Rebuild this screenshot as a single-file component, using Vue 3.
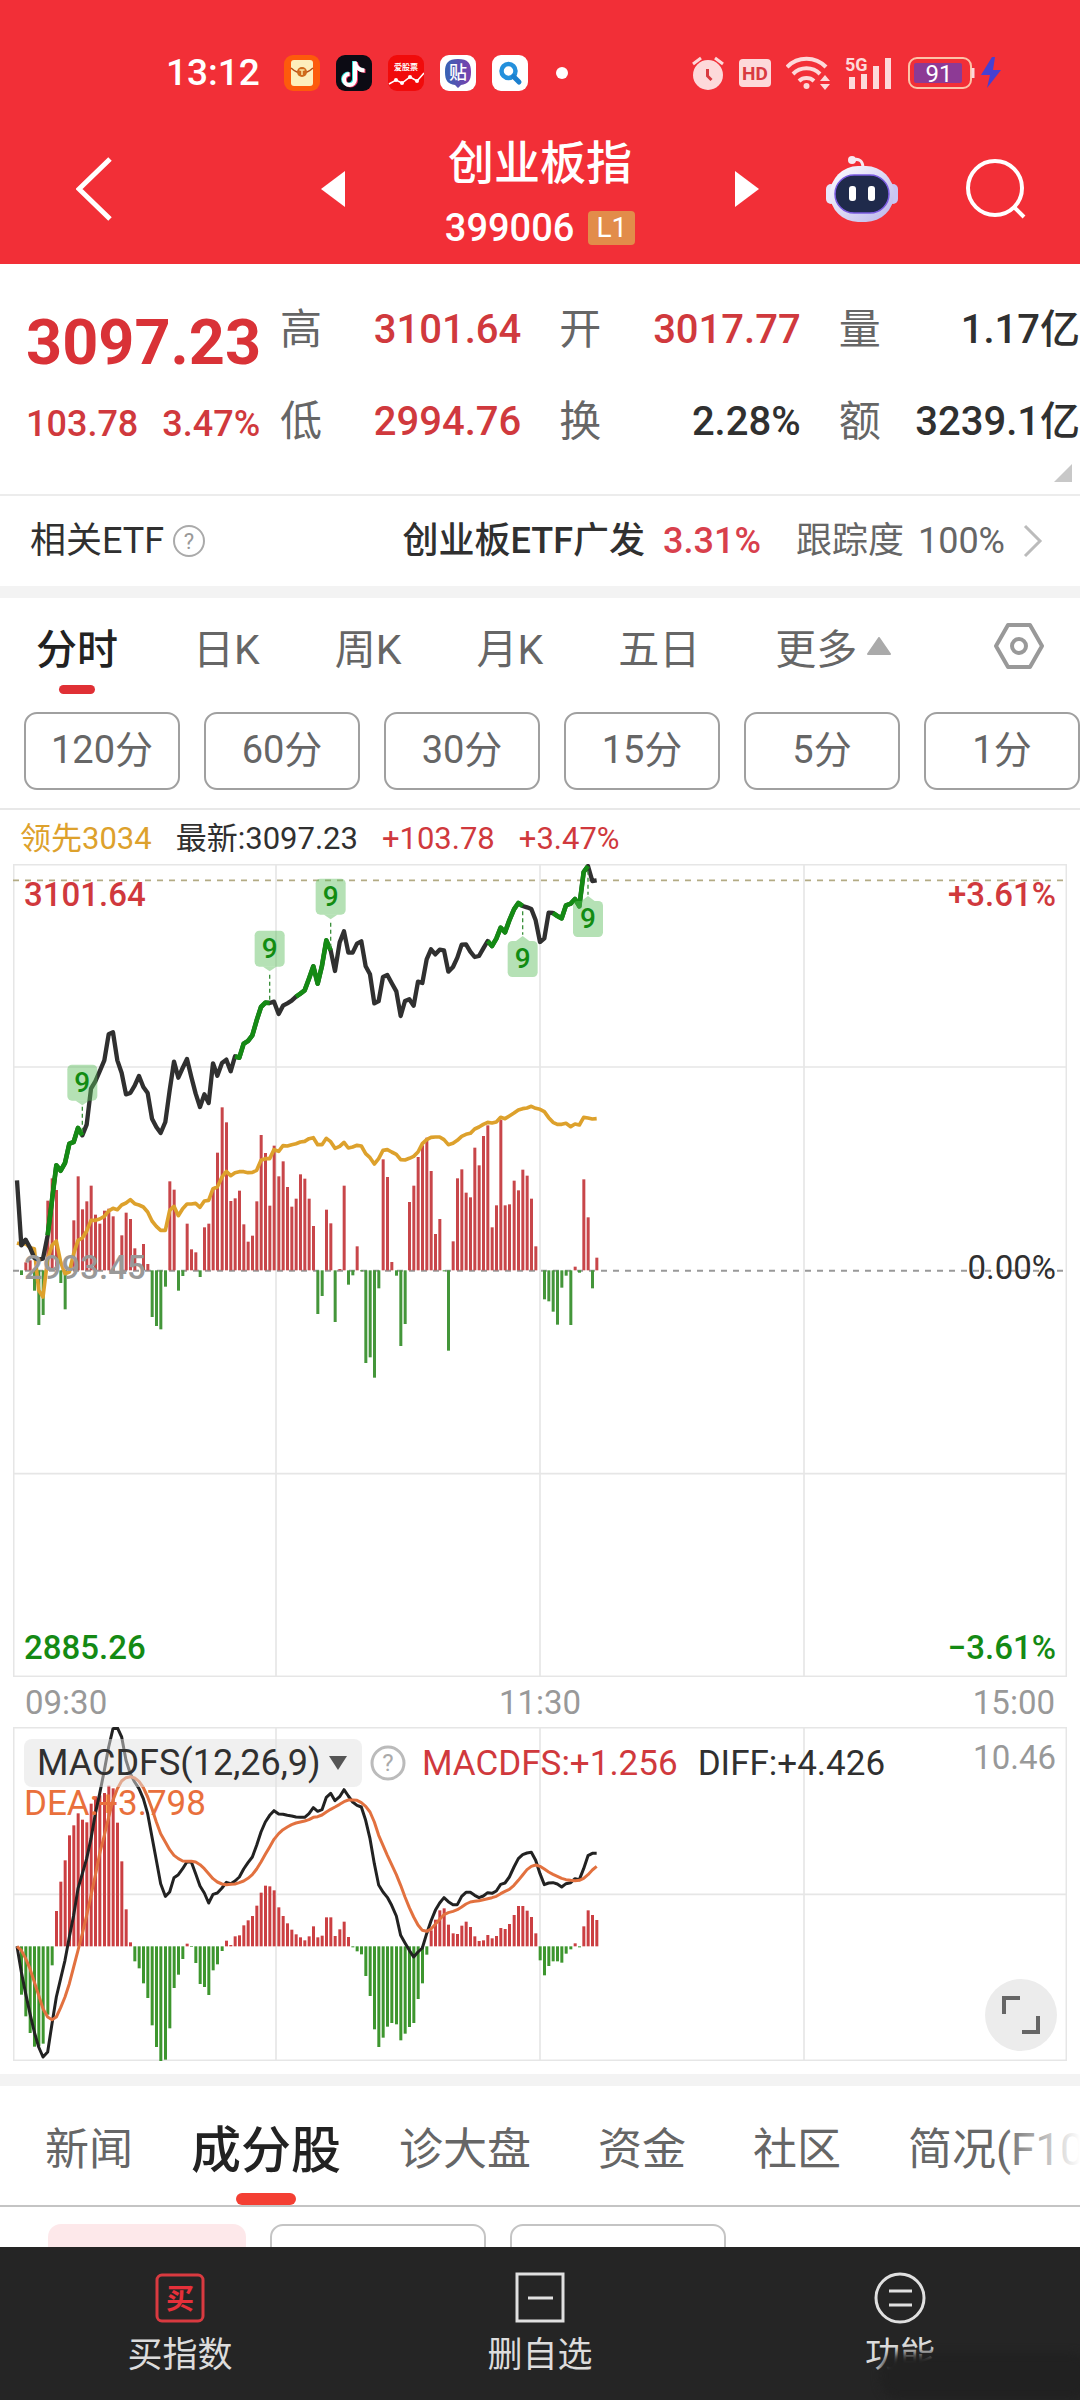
<script setup>
import { ref } from 'vue'

const stats = [
  [{ label: '高', value: '3101.64', up: true }, { label: '开', value: '3017.77', up: true }, { label: '量', value: '1.17亿' }],
  [{ label: '低', value: '2994.76', up: true }, { label: '换', value: '2.28%' }, { label: '额', value: '3239.1亿' }],
]
const periods = ['分时', '日K', '周K', '月K', '五日', '更多']
const minutes = ['120分', '60分', '30分', '15分', '5分', '1分']
const sections = ['新闻', '成分股', '诊大盘', '资金', '社区', '简况(F10)']
const period = ref('分时')
const section = ref('成分股')
const indicator = ref('MACDFS(12,26,9)')

// One entry per trading minute; 3 chart units equal one pixel at full width.
const STEP = 13.075
const ZERO = 1219
const MACD_ZERO = 658
const px = (i) => Math.round(12 + STEP * i)

const price = [
  960, 1155, 1138, 1162, 1193, 1198, 1195, 1125, 1020, 915, 931, 908, 850, 845, 803, 825, 793, 685, 663, 633,
  600, 522, 516, 600, 638, 702, 698, 676, 647, 680, 698, 775, 800, 818, 785, 690, 604, 652, 623, 596,
  650, 700, 740, 702, 728, 609, 646, 608, 598, 633, 588, 592, 550, 542, 525, 480, 440, 427, 428, 424,
  461, 436, 429, 421, 409, 400, 390, 355, 318, 370, 316, 240, 270, 332, 246, 213, 277, 277, 250, 243,
  318, 342, 429, 422, 350, 344, 368, 393, 467, 422, 417, 436, 364, 368, 297, 267, 282, 268, 270, 334,
  320, 292, 253, 252, 274, 290, 287, 264, 242, 257, 235, 202, 216, 180, 147, 128, 137, 141, 146, 180,
  245, 234, 157, 158, 167, 174, 135, 130, 116, 138, 35, 17, 62, 60,
]
const lead = [
  1148, 1152, 1150, 1162, 1165, 1290, 1310, 1195, 1155, 1142, 1205, 1240, 1235, 1180, 1140, 1133, 1112, 1080, 1080, 1076,
  1068, 1052, 1044, 1048, 1034, 1028, 1018, 1030, 1034, 1040, 1055, 1082, 1098, 1110, 1110, 1050, 1038, 1066, 1045, 1031,
  1031, 1029, 1041, 1022, 1020, 985, 980, 950, 933, 946, 937, 934, 934, 937, 936, 930, 900, 895, 895, 868,
  873, 856, 857, 853, 850, 845, 843, 835, 832, 853, 853, 834, 844, 864, 858, 846, 863, 860, 855, 857,
  880, 892, 911, 895, 870, 868, 875, 882, 898, 899, 894, 888, 875, 850, 838, 831, 830, 830, 838, 853,
  849, 840, 828, 822, 819, 806, 800, 792, 786, 788, 785, 771, 775, 767, 758, 749, 745, 743, 738, 744,
  747, 754, 772, 786, 792, 792, 789, 799, 791, 794, 771, 773, 776, 775,
]
const flow = [
  0, -14, 24, 30, -61, -164, -134, 209, 276, 241, -38, -117, 0, 150, 282, 183, 207, 254, 167, 140,
  179, 185, 162, 0, 105, 173, 154, 66, 0, 79, 19, -140, -167, -177, -49, 267, 242, -61, -17, 140,
  63, 54, -20, 129, 140, 245, 353, 489, 444, 208, 216, 239, 138, 86, 104, 207, 406, 352, 194, 374,
  282, 327, 250, 191, 215, 288, 275, 215, 133, -131, -77, 182, 141, -155, 4, 254, -43, -15, 72, -3,
  -278, -261, -322, -54, 333, 280, 25, -16, -227, -161, 205, 254, 340, 375, 398, 298, 109, 154, -3, -241,
  87, 276, 303, 233, 219, 368, 315, 403, 435, 129, 195, 452, 195, 198, 269, 240, 302, 284, 215, 72,
  0, -87, -93, -124, -163, -52, -16, -164, 11, -7, 273, 159, -54, 38,
]
const macd = [
  0, -145, -210, -260, -301, -300, -292, -205, -57, 106, 194, 258, 333, 363, 399, 380, 372, 428, 450, 453,
  460, 482, 474, 371, 255, 111, 12, -45, -66, -111, -155, -237, -302, -344, -340, -246, -125, -85, -38, 8,
  -2, -50, -113, -122, -146, -72, -54, -14, 17, 4, 30, 33, 63, 78, 91, 122, 161, 182, 180, 168,
  117, 91, 69, 50, 36, 27, 18, 30, 60, 27, 32, 87, 87, 31, 51, 74, 28, -3, -15, -24,
  -89, -149, -249, -302, -274, -241, -230, -234, -282, -262, -242, -230, -158, -111, -25, 48, 80, 108, 114, 65,
  39, 37, 62, 74, 58, 30, 16, 18, 34, 24, 31, 55, 52, 67, 94, 121, 121, 107, 88, 39,
  -42, -87, -59, -45, -45, -49, -22, -9, 9, -3, 60, 108, 94, 79,
]
const diff = [
  678, 755, 820, 880, 935, 980, 1010, 995, 910, 830, 775, 720, 650, 585, 505, 460, 415, 355, 280, 220,
  150, 80, 25, 22, 50, 120, 160, 185, 205, 235, 280, 350, 420, 490, 528, 515, 472, 463, 445, 424,
  425, 460, 497, 518, 548, 522, 518, 503, 486, 490, 482, 470, 446, 427, 410, 375, 335, 305, 285, 271,
  281, 282, 285, 287, 290, 291, 291, 280, 262, 273, 268, 231, 219, 241, 229, 208, 227, 245, 255, 260,
  300, 355, 430, 494, 515, 531, 555, 587, 645, 668, 690, 710, 695, 683, 640, 602, 570, 548, 532, 544,
  553, 553, 528, 516, 516, 525, 532, 527, 517, 519, 512, 492, 488, 470, 440, 415, 403, 398, 396, 420,
  460, 493, 488, 487, 491, 500, 490, 487, 475, 478, 445, 406, 399, 399,
]
const dea = [
  678, 690, 715, 745, 785, 825, 865, 890, 898, 890, 862, 830, 790, 740, 690, 640, 585, 525, 465, 400,
  345, 290, 240, 205, 182, 172, 169, 173, 183, 202, 230, 265, 305, 340, 365, 388, 405, 415, 422, 423,
  423, 425, 433, 445, 460, 475, 485, 491, 493, 492, 491, 487, 482, 474, 463, 446, 425, 402, 380, 357,
  340, 328, 320, 313, 308, 305, 302, 298, 291, 289, 284, 275, 267, 260, 252, 244, 239, 239, 240, 247,
  258, 275, 305, 345, 375, 405, 433, 463, 495, 530, 562, 590, 614, 630, 633, 626, 612, 597, 583, 577,
  573, 568, 560, 551, 545, 543, 541, 538, 535, 532, 528, 520, 513, 507, 495, 480, 464, 448, 438, 434,
  438, 446, 455, 462, 468, 474, 478, 480, 481, 480, 474, 463, 449, 438,
]

const line = (series, from, to, shift) =>
  series.slice(from, to + 1).map((y, k) => `${px(from + k)},${y - shift}`).join(' ')

const pricePath = line(price, 0, 133, 11)
const leadPath = line(lead, 0, 133, 11)
const diffPath = line(diff, 0, 133, 20)
const deaPath = line(dea, 0, 133, 20)
// Runs of nine rising minutes are drawn green and end in a "9" flag.
const runs = [7, 50, 64, 108, 123].map((s) => line(price, s, s + 8, 11))
const flags = [
  { i: 15, box: 602, tip: 724, stem: [728, 806], above: true },
  { i: 58, box: 200, tip: 322, stem: [332, 414], above: true },
  { i: 72, box: 44, tip: 166, stem: [176, 254], above: true },
  { i: 116, box: 231, tip: 216, stem: [142, 212], above: false },
  { i: 131, box: 111, tip: 96, stem: [20, 92], above: false },
]
const bars = (series, zero) =>
  series.map((v, i) => ({ x: px(i) - 4, y: v > 0 ? zero - v : zero, h: Math.abs(v), up: v > 0 })).filter((b) => b.h)
const flowBars = bars(flow, ZERO)
const macdBars = bars(macd, MACD_ZERO)
</script>

<template>
  <div class="app">
    <header class="top">
      <div class="status">
        <div class="status-left">
          <span class="clock">13:12</span>
          <svg class="app-icon" viewBox="0 0 36 36"><rect width="36" height="36" rx="9" fill="#fd5a0c" /><rect x="7" y="5" width="22" height="26" rx="3" fill="#fdeebd" /><path d="M7 13 Q18 23 29 13" fill="none" stroke="#b5501a" stroke-width="1.5" /><circle cx="18" cy="17" r="5" fill="#cf6a1c" /><path d="M15.500 15h5M18 15v5" stroke="#fbe3a0" stroke-width="1.500" /></svg>
          <svg class="app-icon" viewBox="0 0 36 36"><rect width="36" height="36" rx="9" fill="#0c0b14" /><g fill="none" stroke-width="4"><path d="M18 6v18a5.500 5.500 0 1 1-5.500-5.500M18 7c1 5 5 8 9.500 8" stroke="#2fe0dc" /><path d="M20 7v18a5.500 5.500 0 1 1-5.500-5.500M20 8c1 5 5 8 9.500 8" stroke="#ef3060" /><path d="M19 6.500v18a5.500 5.500 0 1 1-5.500-5.500M19 7.500c1 5 5 8 9.500 8" stroke="#fff" /></g></svg>
          <svg class="app-icon" viewBox="0 0 36 36"><rect width="36" height="36" rx="9" fill="#f10b0b" /><text x="18" y="15" text-anchor="middle" font-size="8" font-weight="700" fill="#fff">爱股票</text><path d="M1 29 8 25l6 3 8-6 7 4 7-8" fill="none" stroke="#fff" stroke-width="1.500" /><g fill="#fff"><circle cx="8" cy="25" r="2" /><circle cx="14" cy="28" r="2" /><circle cx="22" cy="22" r="2" /><circle cx="29" cy="26" r="2" /></g></svg>
          <svg class="app-icon" viewBox="0 0 36 36"><defs><linearGradient id="tie" x1="0" x2="1"><stop offset="0" stop-color="#3563b4" /><stop offset="1" stop-color="#7b3fae" /></linearGradient></defs><rect width="36" height="36" rx="9" fill="#fff" /><path d="M18 4c10 0 13 4 13 13s-3 12-10 13l-3 3-3-3C8 29 5 26 5 17S8 4 18 4z" fill="url(#tie)" /><text x="18" y="24" text-anchor="middle" font-size="18" font-weight="500" fill="#fff">贴</text></svg>
          <svg class="app-icon" viewBox="0 0 36 36"><rect width="36" height="36" rx="9" fill="#fff" /><circle cx="16.500" cy="16" r="7" fill="none" stroke="#2490dc" stroke-width="4.500" /><path d="M21.500 21.500 27 27" stroke="#1c80cf" stroke-width="5" stroke-linecap="round" /></svg>
          <i class="more-dot"></i>
        </div>
        <div class="status-right">
          <svg width="32" height="36" viewBox="0 0 32 36"><g fill="none" stroke="#fdd9da" stroke-width="3"><path d="M1 9 9 3M31 9 23 3" /></g><circle cx="16" cy="20" r="15" fill="#fdd9da" /><path d="M15.500 14v7l4 4" fill="none" stroke="#d93a40" stroke-width="3" /></svg>
          <svg width="32" height="28" viewBox="0 0 32 28"><rect width="32" height="28" rx="4" fill="#fdd9da" /><text x="16" y="21" text-anchor="middle" font-size="19" font-weight="700" fill="#d93a40">HD</text></svg>
          <svg width="44" height="34" viewBox="0 0 44 34"><g fill="none" stroke="#fdd9da" stroke-width="4"><path d="M1 11a27 27 0 0 1 39 0" /><path d="M7 18a19 19 0 0 1 27 0" /><path d="M13 25a11 11 0 0 1 15 0" /></g><circle cx="20.500" cy="30" r="3" fill="#fdd9da" /><path d="m39 19 5 6H34zM39 34l5-6H34z" fill="#fdd9da" /></svg>
          <svg width="48" height="34" viewBox="0 0 48 34"><text x="0" y="15" font-size="18" font-weight="700" fill="#fdd9da">5G</text><g fill="#fdd9da"><rect x="4" y="21" width="6" height="12" /><rect x="16" y="18" width="6" height="15" /><rect x="28" y="10" width="6" height="23" /><rect x="40" y="2" width="6" height="31" /></g></svg>
          <svg width="96" height="32" viewBox="0 0 96 32"><rect x="1" y="1" width="62" height="30" rx="8" fill="none" stroke="#fdc3a8" stroke-width="2" /><rect x="6" y="6" width="48" height="20" rx="2" fill="#8d3a95" /><path d="M65 11v10" stroke="#fdd9da" stroke-width="3" /><text x="31" y="25" text-anchor="middle" font-size="24" fill="#fff">91</text><path d="M84 0 73 18h9l-3 13 14-18h-8l2-13z" fill="#4740d2" /></svg>
        </div>
      </div>
      <nav class="titlebar">
        <button class="icon-btn back" aria-label="返回"><svg width="36" height="64" viewBox="0 0 36 64"><path d="M34 2 3 32l31 30" fill="none" stroke="#fff" stroke-width="5" /></svg></button>
        <div class="switcher">
          <button class="icon-btn" aria-label="上一个"><svg width="24" height="36" viewBox="0 0 24 36"><path d="M24 0v36L0 18z" fill="#fff" /></svg></button>
          <div class="names">
            <h1>创业板指</h1>
            <p>399006 <span class="level">L1</span></p>
          </div>
          <button class="icon-btn" aria-label="下一个"><svg width="24" height="36" viewBox="0 0 24 36"><path d="M0 0v36l24-18z" fill="#fff" /></svg></button>
        </div>
        <div class="tools">
          <button class="icon-btn" aria-label="智能助手">
            <svg width="72" height="68" viewBox="0 0 72 68"><defs><linearGradient id="shell" x1="0" y1="0" x2="1" y2="1"><stop offset="0" stop-color="#fff" /><stop offset="1" stop-color="#b9b4ea" /></linearGradient></defs><path d="M27 5c6-2 10 1 10 8" fill="none" stroke="#f7e9f1" stroke-width="3" /><circle cx="26" cy="5" r="4" fill="#f7e9f1" /><rect x="0" y="29" width="10" height="20" rx="5" fill="#e8e6fa" /><rect x="62" y="29" width="10" height="20" rx="5" fill="#c9c6f4" /><rect x="4" y="11" width="64" height="56" rx="28" fill="url(#shell)" /><rect x="9" y="20" width="54" height="38" rx="19" fill="#1f2a4b" stroke="#7a5be0" stroke-width="1.500" /><rect x="23" y="31" width="7" height="15" rx="3" fill="#fff" /><rect x="42" y="31" width="7" height="15" rx="3" fill="#fff" /></svg>
          </button>
          <button class="icon-btn" aria-label="搜索"><svg width="60" height="60" viewBox="0 0 60 60"><circle cx="29" cy="29" r="27" fill="none" stroke="#fff" stroke-width="4" /><path d="m48 48 10 10" stroke="#fff" stroke-width="4" /></svg></button>
        </div>
      </nav>
    </header>

    <main class="content">
      <section class="quote">
        <div class="last">
          <strong>3097.23</strong>
          <p><span>103.78</span><span>3.47%</span></p>
        </div>
        <div class="stats">
          <div v-for="(row, r) in stats" :key="r" class="stat-row">
            <div v-for="s in row" :key="s.label" class="stat">
              <span>{{ s.label }}</span><b :class="{ up: s.up }">{{ s.value }}</b>
            </div>
          </div>
        </div>
        <svg class="corner" width="18" height="18" viewBox="0 0 18 18"><path d="M18 0v18H0z" fill="#c8c8c8" /></svg>
      </section>

      <a class="etf" href="#etf">
        <span>相关ETF</span>
        <svg class="help" width="34" height="34" viewBox="0 0 34 34"><circle cx="17" cy="17" r="15" fill="none" stroke="#aaa" stroke-width="2" /><text x="17" y="25" text-anchor="middle" font-size="22" fill="#999">?</text></svg>
        <span class="etf-name">创业板ETF广发</span>
        <span class="etf-rise">3.31%</span>
        <span class="etf-track"><span>跟踪度</span><span>100%</span></span>
        <svg width="20" height="34" viewBox="0 0 20 34"><path d="m2 2 15 15L2 32" fill="none" stroke="#bbb" stroke-width="3" /></svg>
      </a>

      <div class="band"></div>

      <div class="periods">
        <button v-for="p in periods" :key="p" :class="{ active: p === period }" @click="period = p">
          {{ p }}<svg v-if="p === '更多'" width="24" height="18" viewBox="0 0 24 18"><path d="M12 1 23 17H1z" fill="#aaa" stroke="#aaa" stroke-width="2" stroke-linejoin="round" /></svg>
        </button>
        <button class="settings" aria-label="设置"><svg width="50" height="48" viewBox="0 0 50 48"><path d="M14 3h22l12 21-12 21H14L2 24z" fill="none" stroke="#999" stroke-width="4" stroke-linejoin="round" /><circle cx="25" cy="24" r="7" fill="none" stroke="#999" stroke-width="4" /></svg></button>
      </div>

      <div class="minutes">
        <button v-for="m in minutes" :key="m">{{ m }}</button>
      </div>

      <p class="legend">
        <span class="lead">领先3034</span><span>最新:3097.23</span><span class="up">+103.78</span><span class="up">+3.47%</span>
      </p>

      <section class="chart">
        <svg viewBox="0 0 3162 2439">
          <g stroke="#e6e6e6" stroke-width="5" fill="none">
            <rect x="2" y="2" width="3158" height="2435" />
            <path d="M0 609H3162M0 1829H3162M789 0V2439M1581 0V2439M2373 0V2439" />
          </g>
          <path d="M0 49H3162" stroke="#b3ab84" stroke-width="5" stroke-dasharray="18 18" />
          <path d="M0 1220H3162" stroke="#999" stroke-width="6" stroke-dasharray="18 18" />
          <rect v-for="b in flowBars" :key="b.x" :x="b.x" :y="b.y" width="9" :height="b.h" :fill="b.up ? '#c8464a' : '#44963a'" />
          <polyline :points="leadPath" fill="none" stroke="#dda12c" stroke-width="11" stroke-linejoin="round" />
          <polyline :points="pricePath" fill="none" stroke="#303030" stroke-width="13" stroke-linejoin="round" />
          <polyline v-for="(r, k) in runs" :key="k" :points="r" fill="none" stroke="#148a14" stroke-width="14" stroke-linejoin="round" />
          <g v-for="f in flags" :key="f.i">
            <path :d="`M${px(f.i)} ${f.stem[0]}V${f.stem[1]}`" stroke="#3b8f3b" stroke-width="4" stroke-dasharray="12 9" />
            <path :d="f.above ? `M${px(f.i) - 20} ${f.box + 108}h40L${px(f.i)} ${f.tip}z` : `M${px(f.i) - 20} ${f.box}h40L${px(f.i)} ${f.tip}z`" fill="#5bbd5b" fill-opacity=".45" />
            <rect :x="px(f.i) - 45" :y="f.box" width="90" height="108" rx="14" fill="#5bbd5b" fill-opacity=".45" />
            <text :x="px(f.i)" :y="f.box + 82" text-anchor="middle" font-size="84" font-weight="500" fill="#128c12">9</text>
          </g>
        </svg>
        <span class="tag high up">3101.64</span>
        <span class="tag high right up">+3.61%</span>
        <span class="tag mid">2993.45</span>
        <span class="tag mid right dark">0.00%</span>
        <span class="tag low down">2885.26</span>
        <span class="tag low right down">−3.61%</span>
      </section>

      <div class="axis"><span>09:30</span><span>11:30</span><span>15:00</span></div>

      <section class="chart macd">
        <svg viewBox="0 0 3162 1002">
          <g stroke="#e6e6e6" stroke-width="5" fill="none">
            <rect x="2" y="2" width="3158" height="998" />
            <path d="M0 502H3162M789 0V1002M1581 0V1002M2373 0V1002" />
          </g>
          <rect v-for="b in macdBars" :key="b.x" :x="b.x" :y="b.y" width="9" :height="b.h" :fill="b.up ? '#cb3f42' : '#3d962e'" />
          <polyline :points="diffPath" fill="none" stroke="#222" stroke-width="9" stroke-linejoin="round" />
          <polyline :points="deaPath" fill="none" stroke="#e2713f" stroke-width="9" stroke-linejoin="round" />
        </svg>
        <div class="macd-head">
          <span class="picker">
            <select v-model="indicator" aria-label="指标"><option>MACDFS(12,26,9)</option></select>
            <svg width="18" height="14" viewBox="0 0 18 14"><path d="M0 0h18L9 14z" fill="#555" /></svg>
          </span>
          <svg class="help" width="36" height="36" viewBox="0 0 36 36"><circle cx="18" cy="18" r="16" fill="none" stroke="#bbb" stroke-width="3" /><text x="18" y="26" text-anchor="middle" font-size="24" fill="#aaa">?</text></svg>
          <span class="up">MACDFS:+1.256</span>
          <span>DIFF:+4.426</span>
        </div>
        <span class="dea">DEA:+3.798</span>
        <span class="tag scale right">10.46</span>
        <button class="expand" aria-label="全屏"><svg width="38" height="38" viewBox="0 0 38 38"><path d="M2 18V2h16M36 20v16H20" fill="none" stroke="#666" stroke-width="4" /></svg></button>
      </section>

      <div class="band"></div>

      <div class="sections">
        <button v-for="s in sections" :key="s" :class="{ active: s === section }" @click="section = s">{{ s }}</button>
      </div>
      <div class="filters"><i class="on"></i><i></i><i></i></div>
    </main>

    <footer class="actions">
      <button>
        <svg width="52" height="52" viewBox="0 0 52 52"><rect x="3" y="3" width="46" height="46" rx="5" fill="none" stroke="#d93a40" stroke-width="3" /><text x="26" y="37" text-anchor="middle" font-size="28" font-weight="700" fill="#e6303a">买</text></svg>
        <span>买指数</span>
      </button>
      <button>
        <svg width="52" height="52" viewBox="0 0 52 52"><path d="M3 2h46v47H3zM14 26h25" fill="none" stroke="#e0e0e0" stroke-width="3" /></svg>
        <span>删自选</span>
      </button>
      <button>
        <svg width="52" height="52" viewBox="0 0 52 52"><circle cx="26" cy="26" r="24" fill="none" stroke="#e0e0e0" stroke-width="3" /><path d="M15 19h23M15 33h23" stroke="#e0e0e0" stroke-width="3" /></svg>
        <span>功能</span>
      </button>
      <i class="smudge"></i>
    </footer>
  </div>
</template>

<style>
body {
  margin: 0;
  background: #fff;
}
</style>

<style scoped>
.app {
  display: flex;
  flex-direction: column;
  height: 100vh;
  overflow: hidden;
  font-family: Roboto, "Noto Sans CJK SC", sans-serif;
  color: #303030;
}
svg { display: block; flex: none; }
button { border: 0; padding: 0; background: none; font: inherit; color: inherit; }
h1, p { margin: 0; }
.up { color: #d0393d; }
.down { color: #148a14; }
.dark { color: #303030; }

.top { flex: none; background: #f22f37; color: #fff; padding-top: 48px; }
.status { display: flex; justify-content: space-between; align-items: center; height: 50px; padding: 0 76px 0 166px; }
.status-left, .status-right { display: flex; align-items: center; gap: 16px; }
.clock { font-size: 37px; line-height: 50px; padding-right: 8px; font-weight: 500; }
.app-icon { width: 36px; height: 36px; }
.more-dot { width: 12px; height: 12px; border-radius: 50%; background: #fff; margin-left: 12px; }
.status-right { gap: 15px; }
.titlebar { display: grid; grid-template-columns: 1fr 438px 1fr; align-items: center; height: 166px; padding: 16px 54px 0; box-sizing: border-box; }
.back { justify-self: start; margin-left: 22px; }
.switcher { display: flex; justify-content: space-between; align-items: center; }
.names { display: flex; flex-direction: column; align-items: center; padding-top: 12px; }
h1 { font-size: 46px; line-height: 66px; font-weight: 500; }
.names p { display: flex; align-items: center; gap: 14px; font-size: 38px; line-height: 64px; font-weight: 500; }
.level { background: #e28c4a; border-radius: 4px; font-size: 28px; line-height: 34px; padding: 0 8px; font-weight: 400; }
.tools { display: flex; justify-content: flex-end; align-items: center; gap: 68px; }

.content { flex: 1; min-height: 0; overflow: hidden; }
.quote { position: relative; display: flex; padding-top: 33px; border-bottom: 2px solid #ececec; box-sizing: border-box; height: 232px; }
.last { width: 280px; flex: none; padding-left: 26px; box-sizing: border-box; color: #d93237; white-space: nowrap; }
.last strong { display: block; font-size: 63px; line-height: 92px; font-weight: 700; }
.last p { display: flex; gap: 24px; font-size: 36px; line-height: 70px; font-weight: 500; color: #d0393d; }
.stats { flex: 1; }
.stat-row { display: flex; gap: 38px; height: 92px; }
.stat { flex: 1; display: flex; justify-content: space-between; font-size: 42px; line-height: 66px; white-space: nowrap; color: #666; }
.stat b { font-weight: 500; font-size: 40px; color: #303030; }
.stat b.up { color: #d0393d; }
.corner { position: absolute; right: 8px; bottom: 12px; }

.etf { display: flex; align-items: center; height: 90px; padding: 0 37px 0 30px; font-size: 36px; line-height: 50px; color: #303030; text-decoration: none; white-space: nowrap; }
.help { margin-left: 8px; }
.etf-name { margin-left: auto; font-weight: 500; }
.etf-rise { margin-left: 18px; color: #d8404c; font-weight: 500; }
.etf-track { display: flex; gap: 14px; margin: 0 18px 0 35px; color: #666; }
.band { height: 12px; background: #f3f3f3; }

.periods { display: flex; gap: 75px; height: 98px; padding: 0 36px; font-size: 41px; color: #666; }
.periods button { position: relative; display: flex; align-items: center; gap: 10px; padding-bottom: 2px; white-space: nowrap; }
.periods .active { color: #222; font-weight: 500; }
.periods .active::after { content: ""; position: absolute; left: 50%; bottom: 2px; width: 36px; height: 9px; margin-left: -18px; border-radius: 5px; background: #e03035; }
.periods .settings { margin-left: auto; }
.minutes { display: flex; gap: 24px; padding: 16px 0 18px 24px; border-bottom: 2px solid #e8e8e8; }
.minutes button { flex: 1; height: 78px; border: 2px solid #a0a0a0; border-radius: 13px; font-size: 38px; line-height: 70px; padding-bottom: 3px; color: #666; box-sizing: border-box; }
.legend { display: flex; gap: 24px; padding: 4px 0 0 20px; font-size: 31px; line-height: 50px; white-space: nowrap; }
.lead { color: #dda12c; }

.chart { position: relative; padding: 0 13px; }
.chart > svg { width: 100%; height: auto; }
.tag { position: absolute; left: 24px; font-size: 33px; line-height: 40px; }
.tag.right { left: auto; right: 24px; }
.high { top: 11px; font-weight: 500; }
.mid { top: 384px; color: #999; font-weight: 500; }
.mid.dark { color: #303030; font-weight: 400; }
.low { bottom: 9px; font-weight: 500; }
.scale { top: 11px; color: #999; }
.axis { display: flex; justify-content: space-between; padding: 2px 25px 0; font-size: 33px; line-height: 48px; color: #999; }
.macd-head { position: absolute; left: 24px; top: 11px; display: flex; align-items: center; height: 50px; font-size: 35px; white-space: nowrap; }
.picker { position: relative; display: flex; align-items: center; width: 338px; height: 48px; border-radius: 8px; background: rgba(225, 225, 225, .5); }
.picker select { appearance: none; width: 100%; height: 48px; border: 0; padding: 0 0 0 13px; background: none; font: inherit; font-size: 36px; color: #303030; }
.picker svg { position: absolute; right: 15px; pointer-events: none; }
.macd-head .up { margin: 0 20px 0 16px; }
.dea { position: absolute; left: 24px; top: 57px; font-size: 35px; line-height: 40px; color: #e9703c; }
.expand { position: absolute; right: 23px; bottom: 10px; display: grid; place-items: center; width: 72px; height: 72px; border-radius: 50%; background: #ececec; }
.macd { margin-bottom: 13px; }

.sections { position: relative; display: flex; gap: 67px; height: 121px; padding-left: 45px; border-bottom: 2px solid #c4c4c4; box-sizing: border-box; font-size: 44px; color: #666; }
.sections button { position: relative; flex: none; }
.sections .active { font-size: 50px; font-weight: 500; color: #222; margin: 0 -9px; }
.sections .active::after { content: ""; position: absolute; left: 50%; bottom: 0; width: 60px; height: 12px; margin-left: -30px; border-radius: 6px; background: #f43f33; }
.sections::after { content: ""; position: absolute; right: 0; top: 0; bottom: 0; width: 80px; background: linear-gradient(90deg, rgba(255, 255, 255, 0), #fff); }
.filters { display: flex; gap: 24px; padding: 17px 0 0 48px; }
.filters i { width: 216px; height: 72px; border: 2px solid #c4c4c4; border-radius: 13px; box-sizing: border-box; }
.filters .on { width: 198px; border: 0; background: #fde8ea; }

.actions { position: relative; flex: none; display: flex; height: 153px; background: #252525; color: #dcdcdc; overflow: hidden; }
.actions button { flex: 1; display: flex; flex-direction: column; align-items: center; padding-top: 25px; font-size: 35px; line-height: 50px; gap: 7px; }
.smudge { position: absolute; right: -10px; top: 106px; width: 210px; height: 46px; border-radius: 20px; background: #212121; filter: blur(4px); }
</style>
